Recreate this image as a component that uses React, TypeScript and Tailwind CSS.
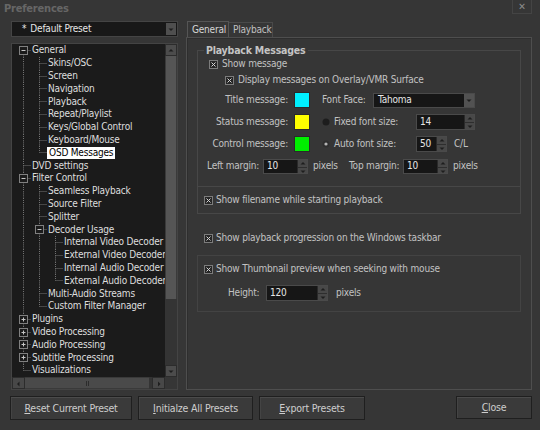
import React from 'react';

type Node = { label: string; level: number; exp?: '-' | '+'; selected?: boolean };

const tree: Node[] = [
  { label: 'General', level: 0, exp: '-' },
  { label: 'Skins/OSC', level: 1 },
  { label: 'Screen', level: 1 },
  { label: 'Navigation', level: 1 },
  { label: 'Playback', level: 1 },
  { label: 'Repeat/Playlist', level: 1 },
  { label: 'Keys/Global Control', level: 1 },
  { label: 'Keyboard/Mouse', level: 1 },
  { label: 'OSD Messages', level: 1, selected: true },
  { label: 'DVD settings', level: 0 },
  { label: 'Filter Control', level: 0, exp: '-' },
  { label: 'Seamless Playback', level: 1 },
  { label: 'Source Filter', level: 1 },
  { label: 'Splitter', level: 1 },
  { label: 'Decoder Usage', level: 1, exp: '-' },
  { label: 'Internal Video Decoder', level: 2 },
  { label: 'External Video Decoder', level: 2 },
  { label: 'Internal Audio Decoder', level: 2 },
  { label: 'External Audio Decoder', level: 2 },
  { label: 'Multi-Audio Streams', level: 1 },
  { label: 'Custom Filter Manager', level: 1 },
  { label: 'Plugins', level: 0, exp: '+' },
  { label: 'Video Processing', level: 0, exp: '+' },
  { label: 'Audio Processing', level: 0, exp: '+' },
  { label: 'Subtitle Processing', level: 0, exp: '+' },
  { label: 'Visualizations', level: 0 },
];

// does the branch at `level` continue below row i?
const continues = (i: number, level: number) => {
  for (let j = i + 1; j < tree.length; j++) {
    if (tree[j].level < level) return false;
    if (tree[j].level === level) return true;
  }
  return false;
};

const LINE = '#767676';

const TreeCell = ({ top, bottom, branch, exp }: { top: boolean; bottom: boolean; branch: boolean; exp?: '-' | '+' }) => (
  <svg width="16" height="12.8" viewBox="0 0 16 12.8" className="shrink-0">
    {top && <line x1="8.5" y1="0" x2="8.5" y2="6.4" stroke={LINE} strokeDasharray="1 1" />}
    {bottom && <line x1="8.5" y1="6.4" x2="8.5" y2="12.8" stroke={LINE} strokeDasharray="1 1" />}
    {branch && <line x1="8.5" y1="6.5" x2="16" y2="6.5" stroke={LINE} strokeDasharray="1 1" />}
    {exp && (
      <>
        <rect x="4.5" y="2.5" width="8" height="8" fill="#1b1b1b" stroke="#808080" />
        <line x1="6.5" y1="6.5" x2="10.5" y2="6.5" stroke="#c8c8c8" />
        {exp === '+' && <line x1="8.5" y1="4.5" x2="8.5" y2="8.5" stroke="#c8c8c8" />}
      </>
    )}
  </svg>
);

const Tri = ({ dir, color = '#1e1e1e' }: { dir: 'up' | 'down' | 'left' | 'right'; color?: string }) => {
  const d = {
    up: 'M1.5 4.5L4 2L6.5 4.5Z',
    down: 'M1.5 2.5L4 5L6.5 2.5Z',
    left: 'M4.5 1.5L2 4L4.5 6.5Z',
    right: 'M3 1.5L5.5 4L3 6.5Z',
  }[dir];
  return (
    <svg width="8" height="7" viewBox="0 0 8 7">
      <path d={d} fill={color} />
    </svg>
  );
};

const Check = () => (
  <svg width="9" height="9" viewBox="0 0 9 9" className="shrink-0">
    <rect x="0.5" y="0.5" width="8" height="8" fill="#262626" stroke="#7c7c7c" />
    <path d="M2.5 2.5L6.5 6.5M6.5 2.5L2.5 6.5" stroke="#d4d4d4" />
  </svg>
);

const Spin = ({ value, className }: { value: string; className: string }) => (
  <div className={`flex border border-[#4a4a4a] bg-[#161616] ${className}`}>
    <div className="flex-1 flex items-center pl-[3px] text-[#e6e6e6]">{value}</div>
    <div className="w-[10px] flex flex-col bg-[#484848] border-l border-[#2a2a2a]">
      <div className="flex-1 flex items-center justify-center border-b border-[#2e2e2e]">
        <Tri dir="up" />
      </div>
      <div className="flex-1 flex items-center justify-center">
        <Tri dir="down" />
      </div>
    </div>
  </div>
);

const Btn = ({ children, className }: { children: React.ReactNode; className: string }) => (
  <div
    className={`flex items-center justify-center border border-[#1f1f1f] bg-[#3a3a3a] shadow-[inset_0_1px_0_#4b4b4b,inset_1px_0_0_#444] text-[#cdcdcd] ${className}`}
  >
    {children}
  </div>
);

const Swatch = ({ className }: { className: string }) => (
  <div className={`w-[16px] h-[16px] border border-[#2a2a2a] ${className}`} />
);

export default function App() {
  return (
    <div className="w-[540px] h-[430px] bg-[#363636] overflow-hidden text-[10px] tracking-[-0.2px] leading-none font-['DejaVu_Sans_Condensed','Liberation_Sans',sans-serif] text-[#c2c2c2] select-none">
      {/* title bar */}
      <div className="h-[21px] flex items-start justify-between">
        <div className="pl-[4px] pt-[3px] text-[11px] font-bold text-[#666]">Preferences</div>
        <div className="mr-[8px] w-[20px] h-[14px] border border-[#444] border-t-0 flex items-center justify-center text-[10px] text-[#8c8c8c]">
          ✕
        </div>
      </div>

      {/* main */}
      <div className="h-[369px] flex pl-[11px]">
        {/* left column */}
        <div className="w-[167px] flex flex-col">
          <div className="h-[16px] flex items-center bg-[#181818] border border-[#444] text-[#e6e6e6]">
            <span className="pl-[10px] pr-[4px]">*</span>
            <span className="flex-1">Default Preset</span>
            <div className="w-[10px] h-[12px] mr-[1px] bg-[#4f4f4f] flex items-center justify-center">
              <Tri dir="down" />
            </div>
          </div>

          <div className="mt-[6px] h-[347px] flex flex-col bg-[#1b1b1b] border border-[#444]">
            <div className="flex-1 flex min-h-0">
              <div className="flex-1 overflow-hidden text-[#dedede]">
                {tree.map((n, i) => {
                  const cells = [];
                  for (let a = 0; a < n.level; a++) {
                    const c = continues(i, a);
                    cells.push(<TreeCell key={a} top={c} bottom={c} branch={false} />);
                  }
                  cells.push(
                    <TreeCell
                      key="own"
                      top={!(i === 0 && n.level === 0)}
                      bottom={continues(i, n.level)}
                      branch
                      exp={n.exp}
                    />,
                  );
                  return (
                    <div key={n.label} className="h-[12.8px] flex items-center pl-[3px] whitespace-nowrap">
                      {cells}
                      <span
                        className={
                          n.selected
                            ? 'h-[12px] flex items-center px-[2px] bg-white text-black'
                            : 'h-[12px] flex items-center px-[1px]'
                        }
                      >
                        {n.label}
                      </span>
                    </div>
                  );
                })}
              </div>
              {/* vertical scrollbar */}
              <div className="w-[12px] flex flex-col bg-[#343434]">
                <div className="h-[12px] bg-[#4c4c4c] border border-[#2c2c2c] flex items-center justify-center">
                  <Tri dir="up" />
                </div>
                <div className="h-[243px] bg-[#555] border-x border-[#3a3a3a]" />
                <div className="flex-1" />
                <div className="h-[12px] bg-[#4c4c4c] border border-[#2c2c2c] flex items-center justify-center">
                  <Tri dir="down" />
                </div>
              </div>
            </div>
            {/* horizontal scrollbar */}
            <div className="h-[12px] flex bg-[#343434]">
              <div className="w-[13px] bg-[#484848] border border-[#2c2c2c] flex items-center justify-center">
                <Tri dir="left" />
              </div>
              <div className="w-[124px] bg-[#4a4a4a] border-y border-[#3a3a3a] flex items-center justify-center">
                <div className="w-[3px] h-[5px] border-x border-[#2c2c2c]" />
              </div>
              <div className="flex-1" />
              <div className="w-[13px] bg-[#484848] border border-[#2c2c2c] flex items-center justify-center">
                <Tri dir="right" />
              </div>
              <div className="w-[12px] bg-[#363636]" />
            </div>
          </div>
        </div>

        {/* right column */}
        <div className="ml-[8px] w-[346px] flex flex-col">
          <div className="h-[16px] flex items-end pl-[1px]">
            <div className="h-[17px] w-[42px] -mb-[1px] flex items-center pl-[4px] bg-[#363636] border border-b-0 border-[#555] text-[#d6d6d6]">
              General
            </div>
            <div className="h-[15px] w-[44px] flex items-center pl-[4px] border border-l-0 border-b-0 border-[#4a4a4a] text-[#c0c0c0]">
              Playback
            </div>
          </div>

          <div className="h-[353px] border border-[#4e4e4e] shadow-[inset_1px_1px_0_#2e2e2e] pl-[10px]">
            {/* Playback Messages */}
            <div className="relative mt-[12px] w-[324px] h-[137px] border border-[#474747]">
              <div className="absolute -top-[6px] left-[6px] px-[2px] bg-[#363636] font-bold text-[10.5px] text-[#c4c4c4]">
                Playback Messages
              </div>
              <div className="mt-[6px] h-[14px] flex items-center gap-[4px] pl-[11px]">
                <Check />
                <span>Show message</span>
              </div>
              <div className="mt-[2px] h-[14px] flex items-center gap-[4px] pl-[27px]">
                <Check />
                <span>Display messages on Overlay/VMR Surface</span>
              </div>

              <div className="mt-[2px] h-[22px] flex items-center">
                <div className="w-[90px] text-right">Title message:</div>
                <Swatch className="ml-[6px] bg-[#00f0ff]" />
                <div className="ml-[12px] w-[51px]">Font Face:</div>
                <div className="w-[102px] h-[15px] flex items-center bg-[#161616] border border-[#4a4a4a] text-[#e6e6e6]">
                  <span className="flex-1 pl-[4px]">Tahoma</span>
                  <div className="w-[10px] h-full bg-[#525252] flex items-center justify-center">
                    <Tri dir="down" />
                  </div>
                </div>
              </div>

              <div className="h-[22px] flex items-center">
                <div className="w-[90px] text-right">Status message:</div>
                <Swatch className="ml-[6px] bg-[#ffff00]" />
                <div className="ml-[12px] w-[94px] flex items-center">
                  <svg width="8" height="8" viewBox="0 0 8 8" className="shrink-0">
                    <circle cx="4" cy="4" r="3.5" fill="#1d1d1d" />
                  </svg>
                  <span className="ml-[4px]">Fixed font size:</span>
                </div>
                <Spin value="14" className="w-[59px] h-[16px]" />
              </div>

              <div className="h-[22px] flex items-center">
                <div className="w-[90px] text-right">Control message:</div>
                <Swatch className="ml-[6px] bg-[#00ee00]" />
                <div className="ml-[12px] w-[94px] flex items-center">
                  <svg width="8" height="8" viewBox="0 0 8 8" className="shrink-0">
                    <circle cx="4" cy="4" r="3.5" fill="#2e2e2e" />
                    <circle cx="4" cy="4" r="1.6" fill="#b4b4b4" />
                  </svg>
                  <span className="ml-[4px]">Auto font size:</span>
                </div>
                <Spin value="50" className="w-[31px] h-[16px]" />
                <span className="ml-[7px]">C/L</span>
              </div>

              <div className="h-[22px] flex items-center pl-[9px]">
                <div className="w-[56px]">Left margin:</div>
                <Spin value="10" className="w-[45px] h-[15px]" />
                <div className="ml-[5px] w-[36px]">pixels</div>
                <div className="w-[54px]">Top margin:</div>
                <Spin value="10" className="w-[45px] h-[15px]" />
                <div className="ml-[5px]">pixels</div>
              </div>
            </div>

            {/* Show filename */}
            <div className="w-[324px] h-[27px] border-x border-b border-[#474747] flex items-center gap-[3px] pl-[6px]">
              <Check />
              <span>Show filename while starting playback</span>
            </div>

            <div className="mt-[17px] h-[14px] flex items-center gap-[3px] pl-[7px]">
              <Check />
              <span>Show playback progression on the Windows taskbar</span>
            </div>

            {/* Thumbnail */}
            <div className="mt-[10px] w-[324px] h-[57px] border border-[#434343]">
              <div className="mt-[6px] h-[14px] flex items-center gap-[3px] pl-[6px]">
                <Check />
                <span>Show Thumbnail preview when seeking with mouse</span>
              </div>
              <div className="mt-[9px] h-[16px] flex items-center pl-[30px]">
                <div className="w-[38px]">Height:</div>
                <Spin value="120" className="w-[62px] h-[16px]" />
                <div className="ml-[8px]">pixels</div>
              </div>
            </div>
          </div>
        </div>
      </div>

      {/* buttons */}
      <div className="pt-[6px] flex items-start text-[10.5px]">
        <Btn className="ml-[10px] w-[122px] h-[24px]">
          <span>
            <span className="underline">R</span>eset Current Preset
          </span>
        </Btn>
        <Btn className="ml-[6px] w-[115px] h-[24px]">
          <span>
            <span className="underline">I</span>nitialze All Presets
          </span>
        </Btn>
        <Btn className="ml-[6px] w-[106px] h-[24px]">
          <span>
            <span className="underline">E</span>xport Presets
          </span>
        </Btn>
        <Btn className="ml-[91px] w-[76px] h-[23px]">
          <span>
            <span className="underline">C</span>lose
          </span>
        </Btn>
      </div>
    </div>
  );
}
